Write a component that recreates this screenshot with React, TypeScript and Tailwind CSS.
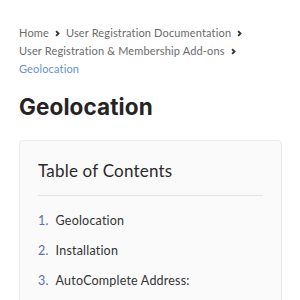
const toc = ["Geolocation", "Installation", "AutoComplete Address:"];

const Chevron = () => (
  <svg viewBox="0 0 10 10" className="inline-block w-[7px] h-[7px] mx-[5px] align-[0px]">
    <path d="M3 1.5 L6.5 5 L3 8.5" fill="none" stroke="#333" strokeWidth="2.6" />
  </svg>
);

export default function App() {
  return (
    <div className="w-[300px] h-[300px] overflow-hidden bg-white font-['Lato',sans-serif]">
      <div className="pl-[19px] pr-[17px] pt-[24px]">
        <nav className="text-[11px] leading-[18px] text-[#6b6b6b] tracking-[0.15px] whitespace-nowrap">
          <div>
            Home
            <Chevron />
            User Registration Documentation
            <Chevron />
          </div>
          <div>
            User Registration &amp; Membership Add-ons
            <Chevron />
          </div>
          <div className="text-[#6b8fd6]">Geolocation</div>
        </nav>

        <h1 className="mt-[14px] text-[22.5px] leading-[30px] font-bold text-[#242424] font-['Inter',sans-serif] tracking-[0.1px]">
          Geolocation
        </h1>

        <div className="mt-[18px] w-[263px] border border-[#ebebeb] rounded-[4px] bg-[#fafafa] px-[18px] pt-[18px] pb-[20px]">
          <h2 className="text-[17px] leading-[24px] text-[#2a2a2a] tracking-[0.2px]">Table of Contents</h2>
          <div className="mt-[12px] border-t border-[#e3e3e3]" />
          <ol className="mt-[16px] flex flex-col gap-[12px]">
            {toc.map((t, i) => (
              <li key={t} className="flex gap-[7px] text-[12.5px] leading-[18px] text-[#333] tracking-[0.2px]">
                <span className="text-[#5b6db3]">{i + 1}.</span>
                <span>{t}</span>
              </li>
            ))}
          </ol>
        </div>
      </div>
    </div>
  );
}
